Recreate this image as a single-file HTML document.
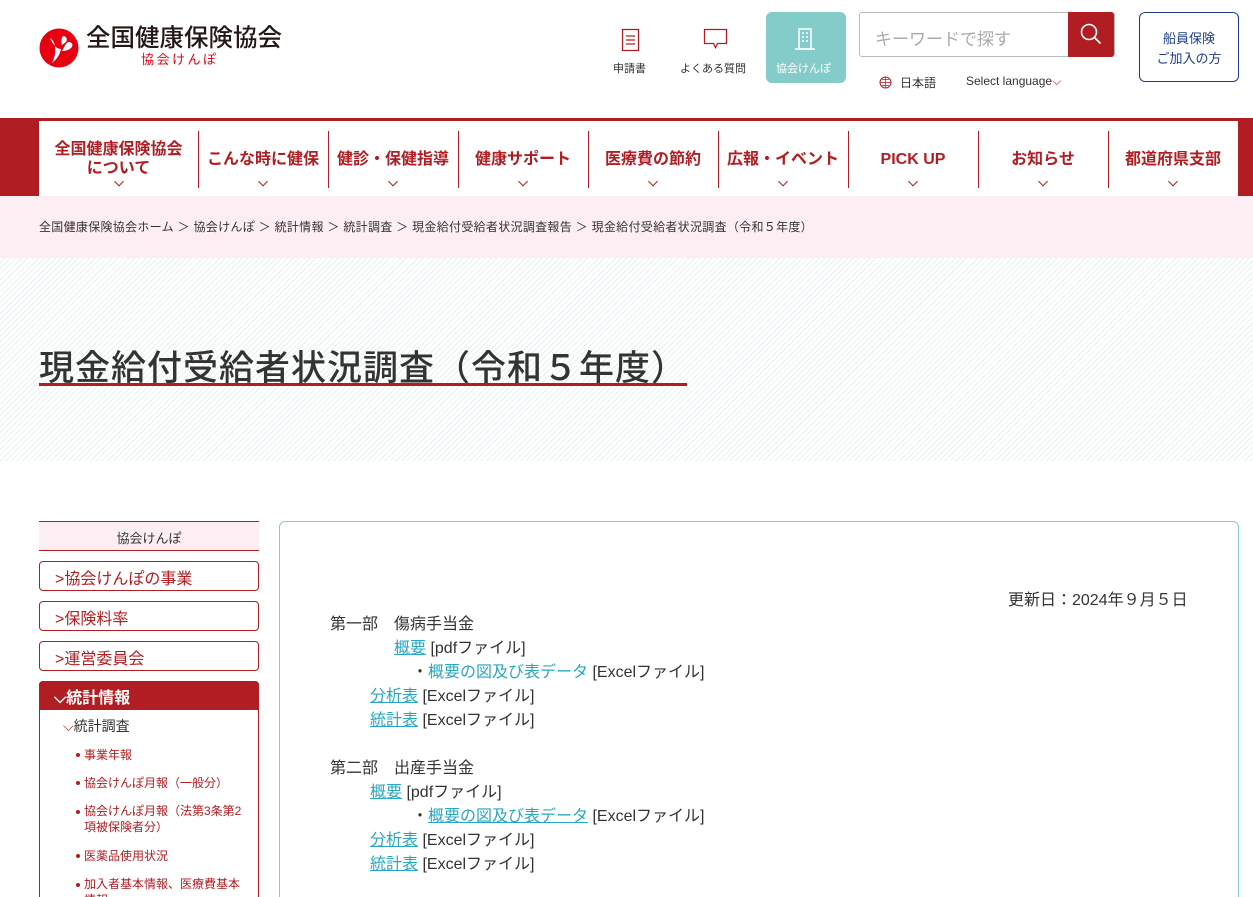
<!DOCTYPE html>
<html><head><meta charset="utf-8"><style>
*{margin:0;padding:0;box-sizing:border-box}
html,body{width:1253px;height:897px;overflow:hidden}
body{background:#fff;font-family:"Liberation Sans","Noto Sans CJK JP",sans-serif;color:#333;position:relative}
.a{position:absolute}
.nav{top:118px;left:0;width:1253px;height:78px;background:#b01e24}
.navin{position:absolute;left:39px;top:3px;width:1199px;height:75px;background:#fff;display:flex}
.ni{position:relative;height:75px;width:130px;color:#b01e24;font-weight:bold;font-size:16px;text-align:center;display:flex;align-items:center;justify-content:center;line-height:19px;padding-top:1px}
.ni:after{content:"";position:absolute;left:50%;top:57px;width:6px;height:6px;border-right:1px solid #b01e24;border-bottom:1px solid #b01e24;transform:translateX(-50%) rotate(45deg)}
.sep{position:absolute;top:10px;width:1px;height:57px;background:#b01e24}
.crumb{top:196px;left:0;width:1253px;height:62px;background:#fdeef3;font-size:12px;color:#333;padding:22px 0 0 39px;letter-spacing:.3px}
.hero{top:258px;left:0;width:1253px;height:203px;background:repeating-linear-gradient(135deg,#fff 0 3px,#e3f2f1 3px 4px)}
.sb{position:absolute;left:39px;width:220px;height:30px;border:1px solid #b01e24;border-radius:4px;color:#b01e24;font-size:16px;padding:3px 0 0 15px}
.m{position:absolute;font-size:16px;color:#333;line-height:24px;white-space:nowrap}
.lk{color:#2aa7c0;text-decoration:underline}
.sub{font-size:12px;color:#b01e24;position:absolute;left:84px}
.sub:before{content:"";position:absolute;left:-8px;top:7px;width:4px;height:4px;border-radius:50%;background:#b01e24}
</style></head><body>
<svg class="a" style="left:39px;top:28px" width="40" height="40" viewBox="0 0 40 40"><circle cx="20" cy="20" r="19.5" fill="#e60012"/><path d="M11 10c4 2 6 8 5 16-1 5-3 9-3 9 4-3 8-8 9-14-5 0-8-5-11-11z" fill="#fff"/><path d="M24 8c3 0 5 3 3 6l-4 3c-1-3-1-6 1-9z" fill="#fff"/><path d="M29 14c4 0 6 3 3 6-2 2-6 3-9 3 2-3 3-7 6-9z" fill="#fff"/></svg>
<div class="a" style="left:86px;top:24px;font-size:24.5px;color:#231815;letter-spacing:0;font-weight:500;line-height:30px">全国健康保険協会</div>
<div class="a" style="left:141px;top:53px;font-size:13px;color:#e60012;letter-spacing:2.5px;line-height:14px">協会けんぽ</div>
<svg class="a" style="left:621px;top:28px" width="20" height="24"><rect x="1.5" y="1.5" width="16" height="21" fill="none" stroke="#b01e24" stroke-width="1.3"/><path d="M5 8h9M5 12h9M5 16h9" stroke="#b01e24" stroke-width="1.2"/></svg>
<div class="a" style="left:613px;top:60px;font-size:11px;color:#333">申請書</div>
<svg class="a" style="left:703px;top:28px" width="26" height="22"><path d="M1.5 1.5h22v14h-9l-2 4-2-4h-9z" fill="none" stroke="#b01e24" stroke-width="1.3"/></svg>
<div class="a" style="left:680px;top:60px;font-size:11px;color:#333">よくある質問</div>
<div class="a" style="left:766px;top:12px;width:80px;height:71px;background:#84ccc9;border-radius:6px"></div>
<svg class="a" style="left:794px;top:27px" width="22" height="24"><rect x="5" y="2" width="12" height="20" fill="none" stroke="#fff" stroke-width="1.5"/><path d="M8 6h2M12 6h2M8 10h2M12 10h2M8 14h2M12 14h2M1 22h20" stroke="#fff" stroke-width="1.5"/></svg>
<div class="a" style="left:776px;top:60px;font-size:11px;color:#fff">協会けんぽ</div>
<div class="a" style="left:859px;top:12px;width:256px;height:45px;border:1px solid #bbb;border-radius:3px"></div>
<div class="a" style="left:875px;top:25px;font-size:17px;color:#aaa">キーワードで探す</div>
<div class="a" style="left:1068px;top:12px;width:46px;height:45px;background:#b01e24;border-radius:0 3px 3px 0"></div>
<svg class="a" style="left:1079px;top:22px" width="24" height="24"><circle cx="10" cy="10" r="7.5" fill="none" stroke="#fff" stroke-width="1.6"/><path d="M15.5 15.5l6 6" stroke="#fff" stroke-width="1.8"/></svg>
<svg class="a" style="left:879px;top:76px" width="13" height="13"><circle cx="6.5" cy="6.5" r="5.5" fill="none" stroke="#b01e24"/><path d="M1 6.5h11M6.5 1v11M3 3.5h7M3 9.5h7" stroke="#b01e24" stroke-width=".7"/></svg>
<div class="a" style="left:900px;top:74px;font-size:12px;color:#333">日本語</div>
<div class="a" style="left:966px;top:74px;font-size:12px;color:#333">Select language<span style="color:#b01e24">⌵</span></div>
<div class="a" style="left:1139px;top:12px;width:100px;height:70px;border:1px solid #1d3c87;border-radius:6px;font-size:13px;color:#1d3c87;text-align:center;padding-top:16px;line-height:20px">船員保険<br>ご加入の方</div>
<div class="a nav"><div class="navin">
<div class="ni" style="width:159px">全国健康保険協会<br>について</div>
<div class="ni">こんな時に健保</div><div class="ni">健診・保健指導</div><div class="ni">健康サポート</div><div class="ni">医療費の節約</div><div class="ni">広報・イベント</div><div class="ni">PICK UP</div><div class="ni">お知らせ</div><div class="ni">都道府県支部</div>
<div class="sep" style="left:159px"></div><div class="sep" style="left:289px"></div><div class="sep" style="left:419px"></div><div class="sep" style="left:549px"></div><div class="sep" style="left:679px"></div><div class="sep" style="left:809px"></div><div class="sep" style="left:939px"></div><div class="sep" style="left:1069px"></div>
</div></div>
<div class="a crumb">全国健康保険協会ホーム ＞ 協会けんぽ ＞ 統計情報 ＞ 統計調査 ＞ 現金給付受給者状況調査報告 ＞ 現金給付受給者状況調査（令和５年度）</div>
<div class="a hero"></div>
<div class="a" style="left:39px;top:340px;font-size:35px;color:#333;letter-spacing:1px;font-weight:500">現金給付受給者状況調査（令和５年度）</div>
<div class="a" style="left:39px;top:383px;width:648px;height:3px;background:#b01e24"></div>
<div class="a" style="left:39px;top:521px;width:220px;height:30px;background:#fdeef3;border-top:1px solid #b01e24;border-bottom:1px solid #b01e24;font-size:13px;text-align:center;padding-top:6px;color:#333">協会けんぽ</div>
<div class="sb" style="top:561px">&gt;協会けんぽの事業</div>
<div class="sb" style="top:601px">&gt;保険料率</div>
<div class="sb" style="top:641px">&gt;運営委員会</div>
<div class="a" style="left:39px;top:681px;width:220px;height:240px;border:1px solid #b01e24;border-radius:4px 4px 0 0"></div>
<div class="a" style="left:39px;top:681px;width:220px;height:29px;background:#b01e24;border-radius:4px 4px 0 0;color:#fff;font-weight:bold;font-size:16px;padding:3px 0 0 15px">⌵統計情報</div>
<div class="a" style="left:63px;top:716px;font-size:14px;color:#b01e24">⌵<span style="color:#333">統計調査</span></div>
<div class="sub" style="top:746px">事業年報</div>
<div class="sub" style="top:774px">協会けんぽ月報（一般分）</div>
<div class="sub" style="top:803px;line-height:16px">協会けんぽ月報（法第3条第2<br>項被保険者分）</div>
<div class="sub" style="top:847px">医薬品使用状況</div>
<div class="sub" style="top:876px;line-height:16px">加入者基本情報、医療費基本<br>情報</div>
<div class="a" style="left:279px;top:521px;width:960px;height:400px;border:1px solid #84ccc9;border-radius:6px"></div>
<div class="m" style="left:1008px;top:589px">更新日：2024年９月５日</div>
<div class="m" style="left:330px;top:613px">第一部　傷病手当金</div>
<div class="m" style="left:394px;top:637px"><span class="lk">概要</span> [pdfファイル]</div>
<div class="m" style="left:412px;top:661px">・<span class="lk" style="text-decoration:none">概要の図及び表データ</span> [Excelファイル]</div>
<div class="m" style="left:370px;top:685px"><span class="lk">分析表</span> [Excelファイル]</div>
<div class="m" style="left:370px;top:709px"><span class="lk">統計表</span> [Excelファイル]</div>
<div class="m" style="left:330px;top:757px">第二部　出産手当金</div>
<div class="m" style="left:370px;top:781px"><span class="lk">概要</span> [pdfファイル]</div>
<div class="m" style="left:412px;top:805px">・<span class="lk">概要の図及び表データ</span> [Excelファイル]</div>
<div class="m" style="left:370px;top:829px"><span class="lk">分析表</span> [Excelファイル]</div>
<div class="m" style="left:370px;top:853px"><span class="lk">統計表</span> [Excelファイル]</div>
</body></html>
